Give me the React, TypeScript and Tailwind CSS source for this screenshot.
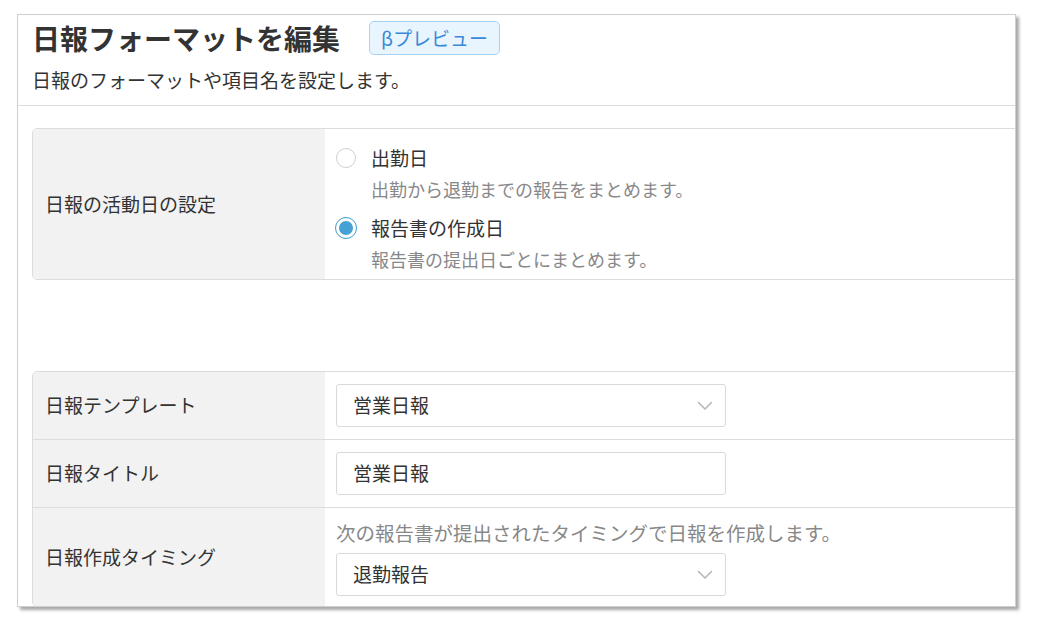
type Option = { id: string; label: string; desc: string; checked: boolean };

const options: Option[] = [
  { id: "attend", label: "出勤日", desc: "出勤から退勤までの報告をまとめます。", checked: false },
  { id: "created", label: "報告書の作成日", desc: "報告書の提出日ごとにまとめます。", checked: true },
];

function Radio({ checked }: { checked: boolean }) {
  if (checked) {
    return (
      <span className="flex h-[22px] w-[22px] items-center justify-center rounded-full border-[1.5px] border-[#3d9cd0] bg-white">
        <span className="h-[14px] w-[14px] rounded-full bg-[#46a2d4]" />
      </span>
    );
  }
  return (
    <span className="flex h-[22px] w-[22px] items-center justify-center">
      <span className="h-[20px] w-[20px] rounded-full border border-[#d0d0d0] bg-white" />
    </span>
  );
}

function Chevron() {
  return (
    <svg width="16" height="10" viewBox="0 0 16 10" fill="none">
      <path d="M1.5 1.5 L8 8 L14.5 1.5" stroke="#b4b4b4" strokeWidth="1.5" strokeLinecap="round" strokeLinejoin="round" />
    </svg>
  );
}

function SelectBox({ value }: { value: string }) {
  return (
    <div className="flex h-[43px] w-[390px] items-center justify-between rounded-[3px] border border-[#dadada] bg-white pl-[16px] pr-[12px]">
      <span className="text-[19px] text-[#333]">{value}</span>
      <Chevron />
    </div>
  );
}

function TextBox({ value }: { value: string }) {
  return (
    <div className="flex h-[43px] w-[390px] items-center rounded-[3px] border border-[#dadada] bg-white pl-[16px]">
      <span className="text-[19px] text-[#333]">{value}</span>
    </div>
  );
}

export default function App() {
  return (
    <div className="min-h-screen bg-white pl-[17px] pt-[14px] font-['Noto_Sans_CJK_JP','Noto_Sans',sans-serif]">
      <div className="h-[593px] w-[999px] overflow-hidden border border-[#cfcfcf] bg-white shadow-[3px_3px_3px_rgba(0,0,0,0.35)]">
        {/* Header */}
        <div className="border-b border-[#dcdcdc] px-[14px] pb-[11px] pt-[5px]">
          <div className="flex h-[36px] items-center">
            <h1 className="text-[28px] font-bold leading-[36px] text-[#333]">日報フォーマットを編集</h1>
            <span className="ml-[29px] flex h-[34px] items-center rounded-[5px] border border-[#a6d2f5] bg-[#e9f5fe] px-[11px] text-[19px] text-[#3a89d8]">
              βプレビュー
            </span>
          </div>
          <p className="mt-[10px] text-[19px] leading-[28px] text-[#333]">日報のフォーマットや項目名を設定します。</p>
        </div>

        <div className="px-[14px]">
          {/* Activity date setting */}
          <div className="-mr-[40px] mt-[22px] flex overflow-hidden rounded-[5px] border border-[#dcdcdc]">
            <div className="flex w-[292px] shrink-0 items-center bg-[#f2f2f2] pl-[12px] text-[19px] text-[#333]">
              日報の活動日の設定
            </div>
            <div className="flex-1 pb-[4px] pl-[10px] pt-[14px]">
              {options.map((o, i) => (
                <div key={o.id} className={i > 0 ? "mt-[8px]" : ""}>
                  <div className="flex h-[30px] items-center">
                    <Radio checked={o.checked} />
                    <span className="ml-[14px] text-[19px] text-[#333]">{o.label}</span>
                  </div>
                  <p className="pl-[36px] text-[18px] leading-[32px] text-[#888]">{o.desc}</p>
                </div>
              ))}
            </div>
          </div>

          {/* Template settings */}
          <div className="-mr-[40px] mt-[91px] overflow-hidden rounded-[5px] border border-[#dcdcdc]">
            <div className="flex border-b border-[#dcdcdc]">
              <div className="flex w-[292px] shrink-0 items-center bg-[#f2f2f2] pl-[12px] text-[19px] text-[#333]">
                日報テンプレート
              </div>
              <div className="flex-1 py-[12px] pl-[11px]">
                <SelectBox value="営業日報" />
              </div>
            </div>
            <div className="flex border-b border-[#dcdcdc]">
              <div className="flex w-[292px] shrink-0 items-center bg-[#f2f2f2] pl-[12px] text-[19px] text-[#333]">
                日報タイトル
              </div>
              <div className="flex-1 py-[12px] pl-[11px]">
                <TextBox value="営業日報" />
              </div>
            </div>
            <div className="flex">
              <div className="flex w-[292px] shrink-0 items-center bg-[#f2f2f2] pl-[12px] text-[19px] text-[#333]">
                日報作成タイミング
              </div>
              <div className="flex-1 pb-[10px] pl-[11px] pt-[10px]">
                <p className="text-[19.5px] leading-[30px] text-[#888]">次の報告書が提出されたタイミングで日報を作成します。</p>
                <div className="mt-[5px]">
                  <SelectBox value="退勤報告" />
                </div>
              </div>
            </div>
          </div>
        </div>
      </div>
    </div>
  );
}
